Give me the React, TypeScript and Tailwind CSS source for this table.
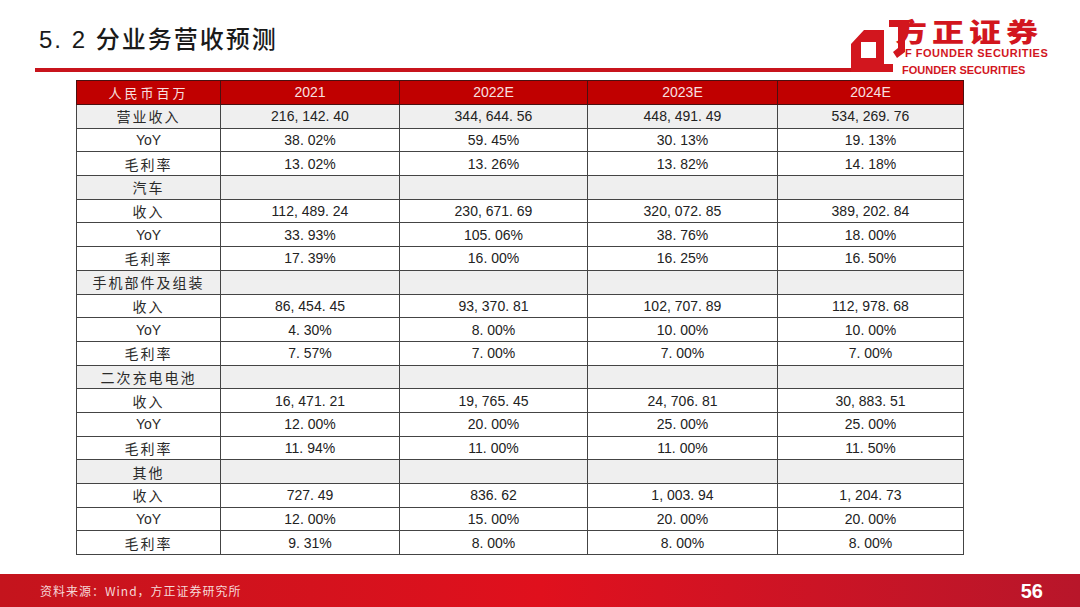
import React from "react";

type Row = { label: string; values: string[]; section?: boolean };

const rows: Row[] = [
  { label: "营业收入", values: ["216, 142. 40", "344, 644. 56", "448, 491. 49", "534, 269. 76"], section: true },
  { label: "YoY", values: ["38. 02%", "59. 45%", "30. 13%", "19. 13%"] },
  { label: "毛利率", values: ["13. 02%", "13. 26%", "13. 82%", "14. 18%"] },
  { label: "汽车", values: ["", "", "", ""], section: true },
  { label: "收入", values: ["112, 489. 24", "230, 671. 69", "320, 072. 85", "389, 202. 84"] },
  { label: "YoY", values: ["33. 93%", "105. 06%", "38. 76%", "18. 00%"] },
  { label: "毛利率", values: ["17. 39%", "16. 00%", "16. 25%", "16. 50%"] },
  { label: "手机部件及组装", values: ["", "", "", ""], section: true },
  { label: "收入", values: ["86, 454. 45", "93, 370. 81", "102, 707. 89", "112, 978. 68"] },
  { label: "YoY", values: ["4. 30%", "8. 00%", "10. 00%", "10. 00%"] },
  { label: "毛利率", values: ["7. 57%", "7. 00%", "7. 00%", "7. 00%"] },
  { label: "二次充电电池", values: ["", "", "", ""], section: true },
  { label: "收入", values: ["16, 471. 21", "19, 765. 45", "24, 706. 81", "30, 883. 51"] },
  { label: "YoY", values: ["12. 00%", "20. 00%", "25. 00%", "25. 00%"] },
  { label: "毛利率", values: ["11. 94%", "11. 00%", "11. 00%", "11. 50%"] },
  { label: "其他", values: ["", "", "", ""], section: true },
  { label: "收入", values: ["727. 49", "836. 62", "1, 003. 94", "1, 204. 73"] },
  { label: "YoY", values: ["12. 00%", "15. 00%", "20. 00%", "20. 00%"] },
  { label: "毛利率", values: ["9. 31%", "8. 00%", "8. 00%", "8. 00%"] },
];

const years = ["2021", "2022E", "2023E", "2024E"];

const cjk = "font-['Noto_Sans_CJK_SC',sans-serif]";
const num = "font-['Liberation_Sans','Noto_Sans_CJK_SC',sans-serif]";

// Founder Securities logo: box mark + red name + english line
const Logo: React.FC = () => (
  <div className="absolute left-[845px] top-[14px] w-[205px] h-[64px]">
    <svg width="64" height="60" viewBox="0 0 64 60" className="absolute left-0 top-0">
      <path
        fillRule="evenodd"
        fill="#d2161e"
        d="M6 30 L19 16 L39 16 L39 56 L6 56 Z M16 28 L31 28 L31 44 L16 44 Z"
      />
      <path fill="#d2161e" d="M39 50 L48 50 L48 58 L6 58 L6 56 L39 56 Z" />
      <path fill="#d2161e" d="M44 6 L66 6 L66 13 L60 13 L60 38 L52 44 L48 38 L53 34 L53 13 L44 13 Z" />
    </svg>
    <div className={`absolute left-[50px] top-[3px] origin-top scale-y-[0.82] text-[32px] leading-[32px] font-black tracking-[5px] text-[#d2161e] ${cjk}`}>
      方正证券
    </div>
    <div className="absolute left-[60px] top-[33px] text-[11px] leading-[12px] font-bold text-[#d2161e] font-['Liberation_Sans',sans-serif] tracking-[0.5px]">
      F FOUNDER SECURITIES
    </div>
    <div className="absolute left-[57px] top-[50px] text-[11px] leading-[13px] font-bold text-[#d2161e] font-['Liberation_Sans',sans-serif]">
      FOUNDER SECURITIES
    </div>
  </div>
);

const App: React.FC = () => {
  return (
    <div className="relative w-[1080px] h-[607px] bg-white flex flex-col overflow-hidden">
      {/* Header */}
      <div className="h-[80px] flex flex-col">
        <div className={`pl-[39px] pt-[26px] text-[24px] leading-[28px] text-[#1a1a1a] font-medium tracking-[2px] ${num}`}>
          5. 2 分业务营收预测
        </div>
        <div className="ml-[35px] mt-[14px] w-[820px] h-[4px] bg-[#c8141c]" />
      </div>
      <Logo />

      {/* Table */}
      <table className="ml-[76px] w-[887px] border-collapse table-fixed">
        <colgroup>
          <col className="w-[144px]" />
          <col className="w-[179px]" />
          <col className="w-[188px]" />
          <col className="w-[190px]" />
          <col className="w-[186px]" />
        </colgroup>
        <thead>
          <tr className="h-[24px] bg-[#c00000]">
            <th className={`border border-[#4a1010] font-normal text-[13px] text-[#f8e0e0] tracking-[3px] ${cjk}`}>
              人民币百万
            </th>
            {years.map((y) => (
              <th key={y} className={`border border-[#4a1010] font-normal text-[14px] text-[#f8e0e0] ${num}`}>
                {y}
              </th>
            ))}
          </tr>
        </thead>
        <tbody>
          {rows.map((r, i) => (
            <tr key={i} className={`h-[23.7px] ${r.section ? "bg-[#efefef]" : "bg-white"}`}>
              <td className={`border border-[#444] p-0 text-center text-[14px] text-[#2a2a2a] leading-[18px] ${r.label === "YoY" ? num : cjk} ${r.label === "YoY" ? "" : "tracking-[2px]"}`}>
                {r.label}
              </td>
              {r.values.map((v, j) => (
                <td key={j} className={`border border-[#444] p-0 text-center text-[14px] text-[#222] leading-[18px] ${num}`}>
                  {v}
                </td>
              ))}
            </tr>
          ))}
        </tbody>
      </table>

      {/* Footer */}
      <div className="mt-auto h-[33px] bg-gradient-to-r from-[#c4141d] via-[#e0101d] to-[#b8162a] flex items-center justify-between pl-[40px] pr-[37px]">
        <span className={`text-[12px] text-[#f6d8d8] tracking-[1px] ${cjk}`}>资料来源：Wind，方正证券研究所</span>
        <span className="text-[20px] font-bold text-white font-['Liberation_Sans',sans-serif]">56</span>
      </div>
    </div>
  );
};

export default App;
